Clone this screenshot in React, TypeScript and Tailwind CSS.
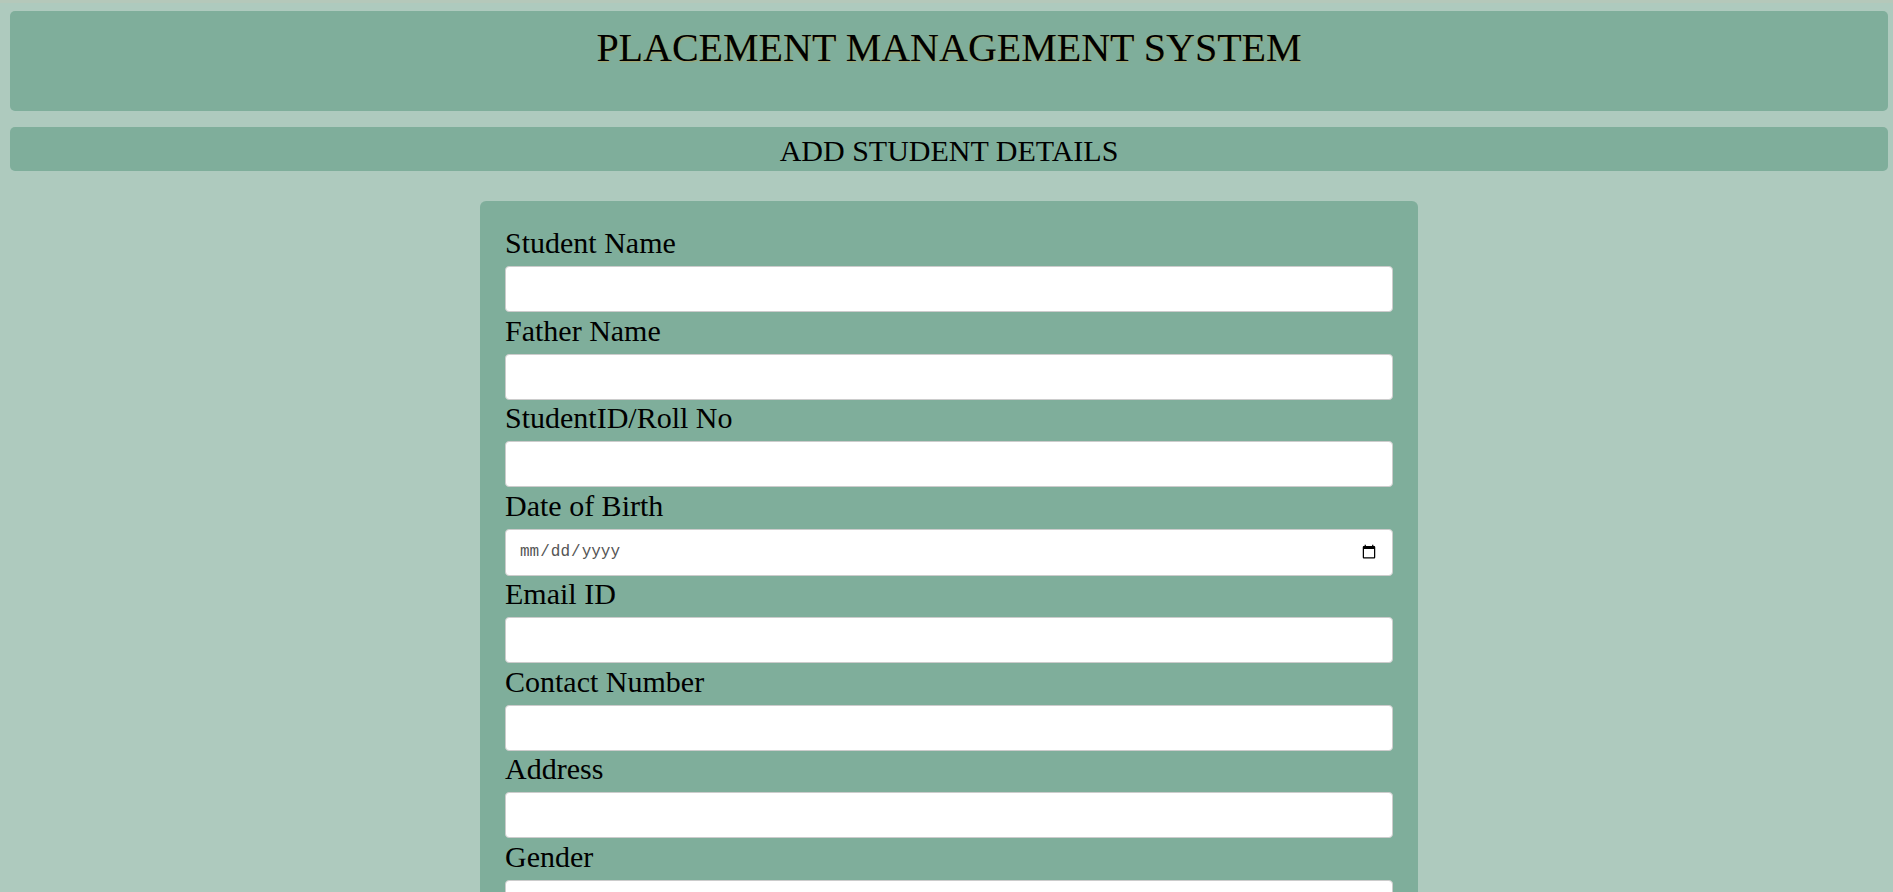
import React from "react";

const fields = [
  { label: "Student Name", type: "text" },
  { label: "Father Name", type: "text" },
  { label: "StudentID/Roll No", type: "text" },
  { label: "Date of Birth", type: "date" },
  { label: "Email ID", type: "email" },
  { label: "Contact Number", type: "text" },
  { label: "Address", type: "text" },
];

export default function App() {
  return (
    <div className="min-h-screen border-t-[3px] border-[#b5c8ba] bg-[#aecabe] pt-[8px] pl-[10px] pr-[5px] pb-[40px] font-['Liberation_Serif','Times_New_Roman',serif] text-black">
      <header className="h-[100px] rounded-[5px] bg-[#7fae9b] pt-[14px] text-center text-[40px] leading-[46px] [text-shadow:1px_1px_1px_#a8a46a]">
        PLACEMENT MANAGEMENT SYSTEM
      </header>
      <div className="mt-[16px] h-[44px] overflow-hidden rounded-[5px] bg-[#7fae9b] text-center text-[30px] leading-[48px]">
        ADD STUDENT DETAILS
      </div>
      <form
        className="mx-auto mt-[30px] w-[938px] rounded-[6px] bg-[#7fae9b] px-[25px] pt-[23.5px] pb-[30px]"
        onSubmit={(e) => e.preventDefault()}
      >
        {fields.map((f) => (
          <div key={f.label}>
            <label className="block pt-[1.5px] text-[30px] leading-[34px]">{f.label}</label>
            {f.type === "date" ? (
              <input
                type="date"
                className="mt-[6px] block h-[47px] w-full rounded-[4px] border border-[#cccccc] bg-white px-[13px] font-['Liberation_Mono',monospace] text-[16px] text-[#555]"
              />
            ) : (
              <input
                type={f.type}
                className="mt-[6px] block h-[46px] w-full rounded-[4px] border border-[#cccccc] bg-white px-[12px] text-[18px]"
              />
            )}
          </div>
        ))}
        <div>
          <label className="block pt-[1.5px] text-[30px] leading-[34px]">Gender</label>
          <select className="mt-[6px] block h-[46px] w-full rounded-[4px] border border-[#cccccc] bg-white px-[20px] font-['Liberation_Sans',Arial,sans-serif] text-[16px] text-[#555]">
            <option>Select</option>
            <option>Male</option>
            <option>Female</option>
          </select>
        </div>
        <div>
          <label className="block pt-[1.5px] text-[30px] leading-[34px]">Branch</label>
          <input type="text" className="mt-[6px] block h-[46px] w-full rounded-[4px] border border-[#cccccc] bg-white px-[12px]" />
        </div>
        <button
          type="submit"
          className="mt-[20px] rounded-[4px] bg-[#4e8a73] px-[24px] py-[10px] text-[22px] text-white"
        >
          Submit
        </button>
      </form>
    </div>
  );
}
